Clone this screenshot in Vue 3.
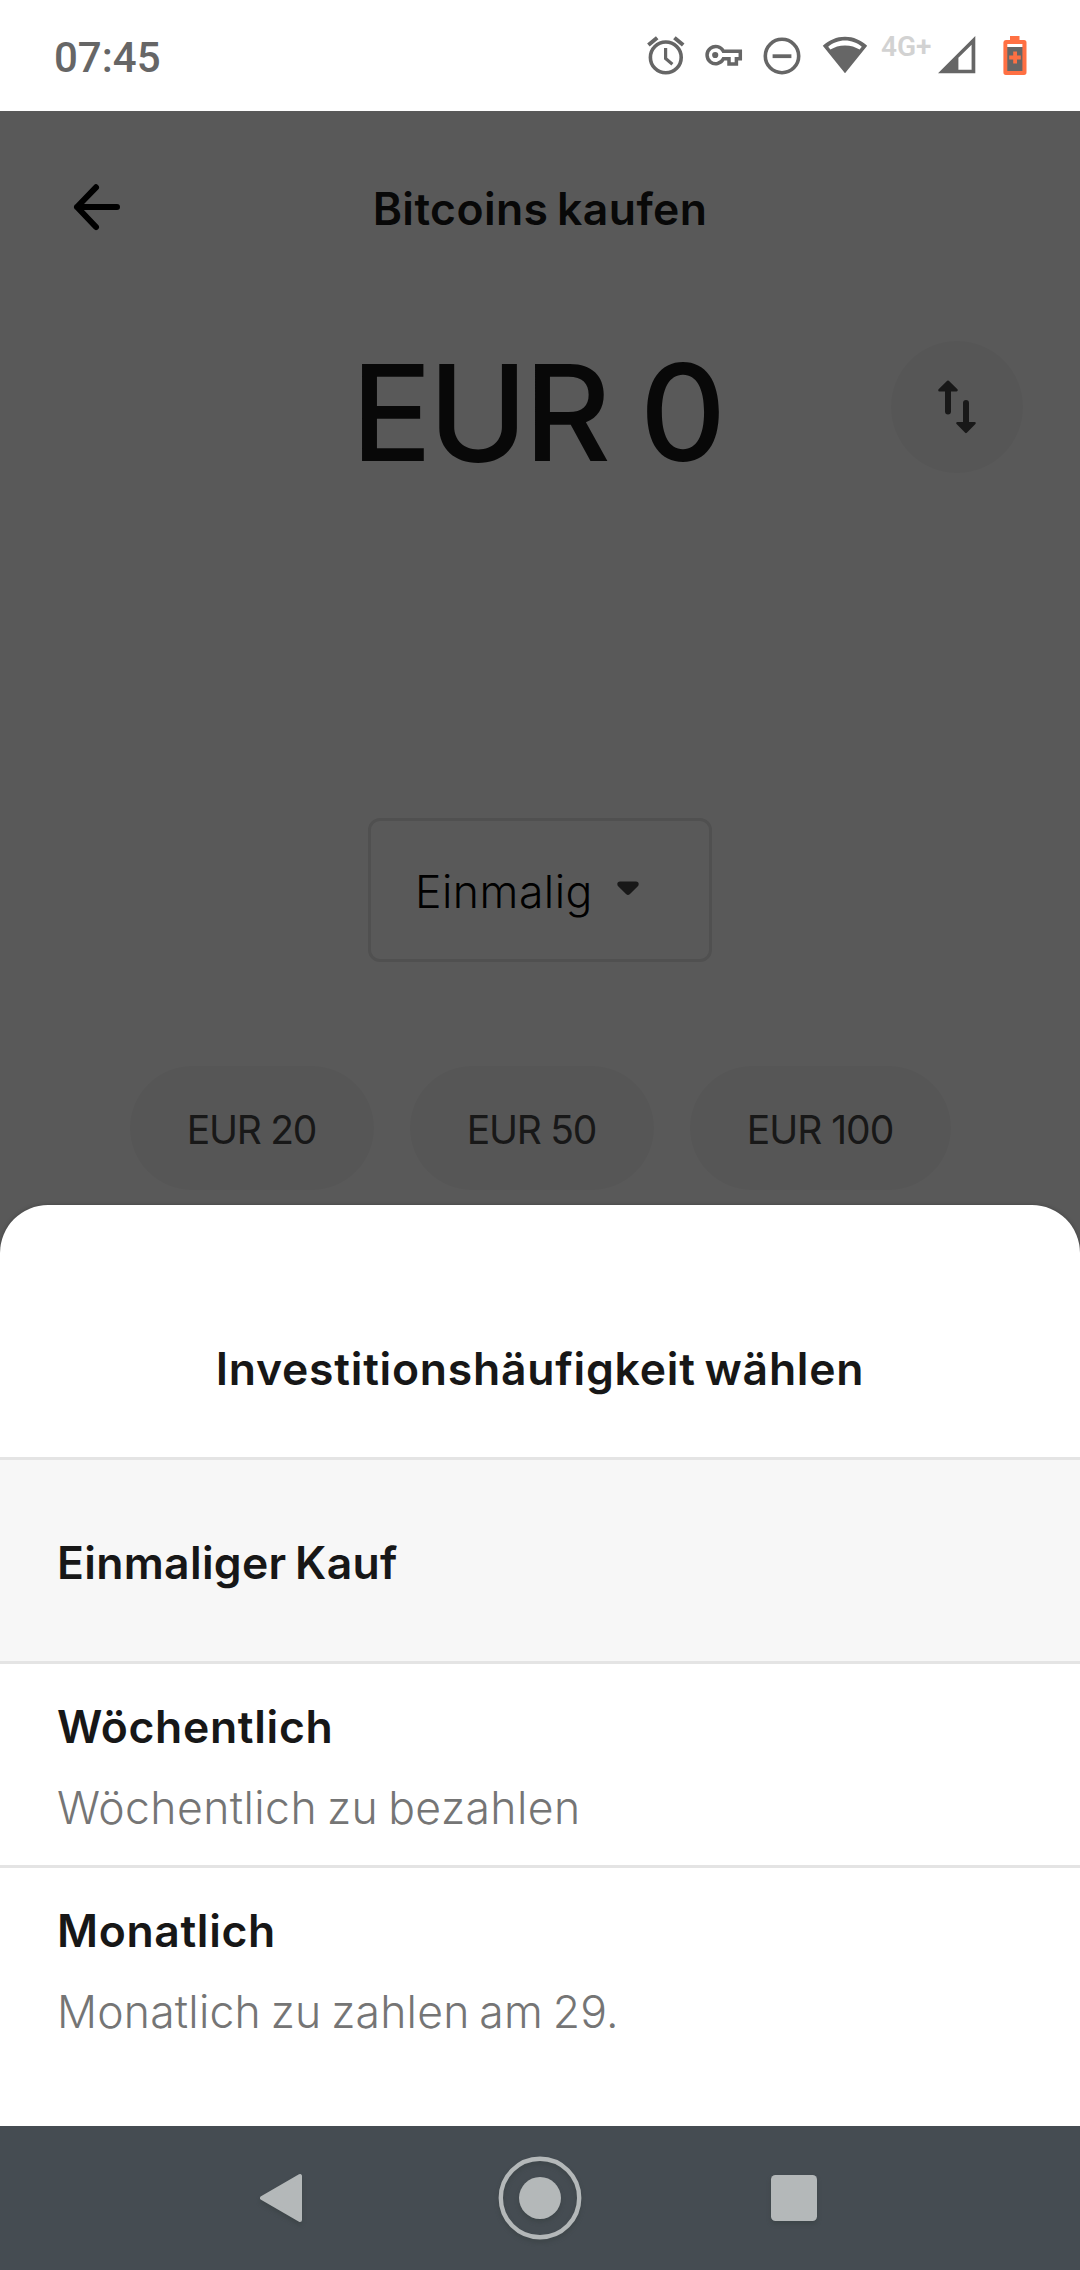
<script setup>
const amounts = [
  { label: 'EUR 20', width: '244px', spacing: '-1.26px' },
  { label: 'EUR 50', width: '244px', spacing: '-1.25px' },
  { label: 'EUR 100', width: '261px', spacing: '-1px' },
]

const options = [
  { title: 'Einmaliger Kauf', spacing: '0.3px', selected: true },
  { title: 'Wöchentlich', spacing: '0.65px', note: 'Wöchentlich zu bezahlen', noteSpacing: '0.43px' },
  { title: 'Monatlich', spacing: '0.63px', note: 'Monatlich zu zahlen am 29.', noteSpacing: '0.2px' },
]
</script>

<template>
  <div class="screen">
    <div class="status">
      <span class="time">07:45</span>
      <div class="indicators">
        <svg class="alarm" width="38" height="40" viewBox="0 0 38 40">
          <g fill="none" stroke="#666" stroke-width="3.6">
            <circle cx="18.8" cy="21.4" r="15.4" />
            <path d="M1.4 9 10.2 1.8M36.2 9 27.4 1.8" stroke-width="4" />
            <path d="M18.6 12V22.6L25.4 28.2" stroke-width="3.2" />
          </g>
        </svg>
        <svg class="key" width="38" height="24" viewBox="0 0 38 24">
          <path fill="none" stroke="#666" stroke-width="3.5" d="M18.4 7.3H35.3V14.8H31.4V20H24V14.8H18.4A8.6 8.6 0 1 1 18.4 7.3Z" />
          <circle cx="10.2" cy="11" r="3.1" fill="#666" />
        </svg>
        <svg class="dnd" width="38" height="38" viewBox="0 0 38 38">
          <circle cx="19" cy="19" r="16.7" fill="none" stroke="#666" stroke-width="3.6" />
          <path d="M9.6 19.2H28.4" stroke="#666" stroke-width="3.8" />
        </svg>
        <svg class="wifi" width="46" height="38" viewBox="0 0 46 38">
          <path fill="#666" fill-rule="evenodd" d="M23 37.2 .8 9.8C7 4.2 14.6.8 23 .8S39 4.2 45.2 9.8ZM6.2 10.7 8.4 13.6C12.5 10.9 17.3 9.4 23 9.4S33.5 10.9 37.6 13.6L39.8 10.7C35.2 7 29.4 4.6 23 4.6S10.8 7 6.2 10.7Z" />
        </svg>
        <span class="network">4G+</span>
        <svg class="signal" width="38" height="38" viewBox="0 0 38 38">
          <path fill="#666" fill-rule="evenodd" d="M0 37.3 37.3 0V37.3ZM20.4 21.8V33.7H33.6V8.8Z" />
        </svg>
        <svg class="battery" width="24" height="40" viewBox="0 0 24 40">
          <path fill="#ff7043" d="M7 0H16.5V4H21Q23.5 4 23.5 6.5V36.3Q23.5 39 21 39H2.8Q.4 39 .4 36.3V6.5Q.4 4 2.8 4H7Z" />
          <path fill="#fff" d="M4.3 8H19.4V11H4.3Z" />
          <path fill="#666" d="M4.3 11H19.4V35H4.3Z" />
          <path fill="#ff7043" d="M10.2 15.6H14V19.6H17.8V23.4H14V27.4H10.2V23.4H6.2V19.6H10.2Z" />
        </svg>
      </div>
    </div>

    <main class="page">
      <header class="bar">
        <svg class="back" width="50" height="50" viewBox="0 0 50 50">
          <path fill="none" stroke="#000" stroke-width="6" stroke-linecap="round" stroke-linejoin="round" d="M47 25H7M26 5.3 7 25 26 45" />
        </svg>
        <h1>Bitcoins kaufen</h1>
      </header>

      <section class="amount">
        <div class="value">EUR 0</div>
        <button class="swap">
          <svg width="44" height="60" viewBox="0 0 44 60">
            <g stroke="#474747" stroke-width="6" stroke-linecap="round">
              <path d="M13 11V34.5M31 26V49" />
            </g>
            <g fill="#474747" stroke="#474747" stroke-width="2.4" stroke-linejoin="round">
              <path d="M13 4.7 21.6 13.2H4.4Z" />
              <path d="M31 54.9 39.6 46.2H22.4Z" />
            </g>
          </svg>
        </button>
      </section>

      <button class="frequency">
        <span>Einmalig</span>
        <svg width="22" height="16" viewBox="0 0 22 16">
          <path fill="#474747" d="M3 .4H19Q21.7.4 21.7 3 21.7 4.5 20.6 5.6L13 13Q11 15 9 13L1.4 5.6Q.3 4.5.3 3 .3.4 3 .4Z" />
        </svg>
      </button>

      <div class="chips">
        <button v-for="a in amounts" :key="a.label" class="chip" :style="{ width: a.width, letterSpacing: a.spacing }">{{ a.label }}</button>
      </div>

      <div class="scrim"></div>
    </main>

    <section class="sheet">
      <h2>Investitionshäufigkeit wählen</h2>
      <ul>
        <li v-for="o in options" :key="o.title" :class="{ selected: o.selected }">
          <span class="title" :style="{ letterSpacing: o.spacing }">{{ o.title }}</span>
          <span v-if="o.note" class="note" :style="{ letterSpacing: o.noteSpacing }">{{ o.note }}</span>
        </li>
      </ul>
    </section>

    <nav class="nav">
      <svg width="1080" height="144" viewBox="0 0 1080 144">
        <g class="glyphs" fill="#b4b8b9">
          <path stroke="#b4b8b9" stroke-width="4" stroke-linejoin="round" d="M300 50V94L262 72Z" />
          <circle cx="540" cy="72" r="21" />
          <circle cx="540" cy="72" r="39.2" fill="none" stroke="#b4b8b9" stroke-width="4.4" />
          <rect x="771" y="49" width="46" height="46" rx="4.5" />
        </g>
      </svg>
    </nav>
  </div>
</template>

<style>
body {
  margin: 0;
}
</style>

<style scoped>
.screen {
  position: relative;
  width: 1080px;
  height: 2270px;
  display: flex;
  flex-direction: column;
  overflow: hidden;
  background: #fff;
  font-family: Inter, "Liberation Sans", sans-serif;
}

button {
  border: 0;
  padding: 0;
  font-family: inherit;
}

h1,
h2,
ul {
  margin: 0;
  padding: 0;
}

.status {
  display: flex;
  justify-content: space-between;
  height: 111px;
  box-sizing: border-box;
  padding: 36px 53px 0 54px;
  font-family: Roboto, sans-serif;
  font-weight: 500;
}

.time {
  padding-top: 1px;
  font-size: 42px;
  line-height: 42px;
  color: #666;
}

.indicators {
  display: flex;
  align-items: flex-start;
}

.key {
  margin: 8px 0 0 20px;
}

.dnd {
  margin: 1px 0 0 20px;
}

.wifi {
  margin-left: 21.5px;
}

.network {
  width: 51px;
  margin: -3px 0 0 13px;
  font-size: 28px;
  font-weight: 600;
  line-height: 28px;
  color: #d2d2d2;
}

.signal {
  margin-left: 6px;
}

.battery {
  margin-left: 27px;
}

.page {
  position: relative;
  flex: none;
  display: flex;
  flex-direction: column;
  align-items: center;
  height: 2015px;
}

.scrim {
  position: absolute;
  inset: 0;
  background: rgba(0, 0, 0, 0.65);
}

.bar {
  display: grid;
  grid-template-columns: 70px 1fr 70px;
  align-items: center;
  width: 940px;
  height: 192px;
}

.bar h1 {
  padding-top: 3px;
  text-align: center;
  font-size: 44.5px;
  font-weight: 600;
  line-height: 54px;
  letter-spacing: 0.4px;
  word-spacing: -3px;
  color: #171717;
}

.amount {
  display: grid;
  grid-template-columns: 132px 1fr 132px;
  align-items: center;
  width: 966px;
  height: 208px;
}

.value {
  grid-column: 2;
  padding: 9px 6px 0 0;
  text-align: center;
  font-size: 134px;
  font-weight: 500;
  line-height: 160px;
  letter-spacing: -3.5px;
  color: #171717;
}

.swap {
  display: grid;
  place-items: center;
  width: 132px;
  height: 132px;
  border-radius: 50%;
  background: #f7f7f7;
}

.frequency {
  display: flex;
  align-items: center;
  gap: 24px;
  flex: none;
  box-sizing: border-box;
  width: 344px;
  height: 144px;
  margin-top: 307px;
  padding-left: 44px;
  border: 3px solid #e4e4e4;
  border-radius: 12px;
  background: #fff;
  color: #000;
}

.frequency span {
  padding-top: 4px;
  font-size: 44.5px;
  font-weight: 300;
  line-height: 54px;
  letter-spacing: 0.5px;
}

.frequency svg {
  margin-bottom: 2px;
}

.chips {
  display: flex;
  gap: 36px;
  margin-top: 104px;
}

.chip {
  height: 124px;
  padding: 3px 0 0;
  border-radius: 62px;
  background: #f7f7f7;
  color: #474747;
  font-size: 39px;
  font-weight: 400;
}

.sheet {
  position: absolute;
  left: 0;
  right: 0;
  top: 1205px;
  height: 921px;
  border-radius: 48px 48px 0 0;
  background: #fff;
  box-shadow: 0 0 4px rgba(0, 0, 0, 0.25);
}

.sheet h2 {
  box-sizing: border-box;
  height: 252px;
  padding-top: 137px;
  text-align: center;
  font-size: 44.5px;
  font-weight: 600;
  line-height: 54px;
  letter-spacing: 0.75px;
  word-spacing: -3px;
  color: #171717;
}

.sheet ul {
  list-style: none;
}

.sheet li {
  display: flex;
  flex-direction: column;
  box-sizing: border-box;
  height: 204px;
  padding: 36px 57px 0;
  border-top: 3px solid #e4e4e4;
}

.sheet li.selected {
  padding-top: 76px;
  background: #f7f7f7;
}

.title,
.note {
  font-size: 44.5px;
  line-height: 54px;
  word-spacing: -3px;
}

.title {
  font-weight: 600;
  color: #171717;
}

.note {
  margin-top: 27px;
  font-weight: 300;
  color: #757575;
}

.nav {
  position: relative;
  flex: none;
  height: 144px;
  background: #454c52;
}

.nav svg {
  display: block;
}

.glyphs {
  filter: drop-shadow(0 3px 2px rgba(50, 60, 60, 0.45));
}
</style>
